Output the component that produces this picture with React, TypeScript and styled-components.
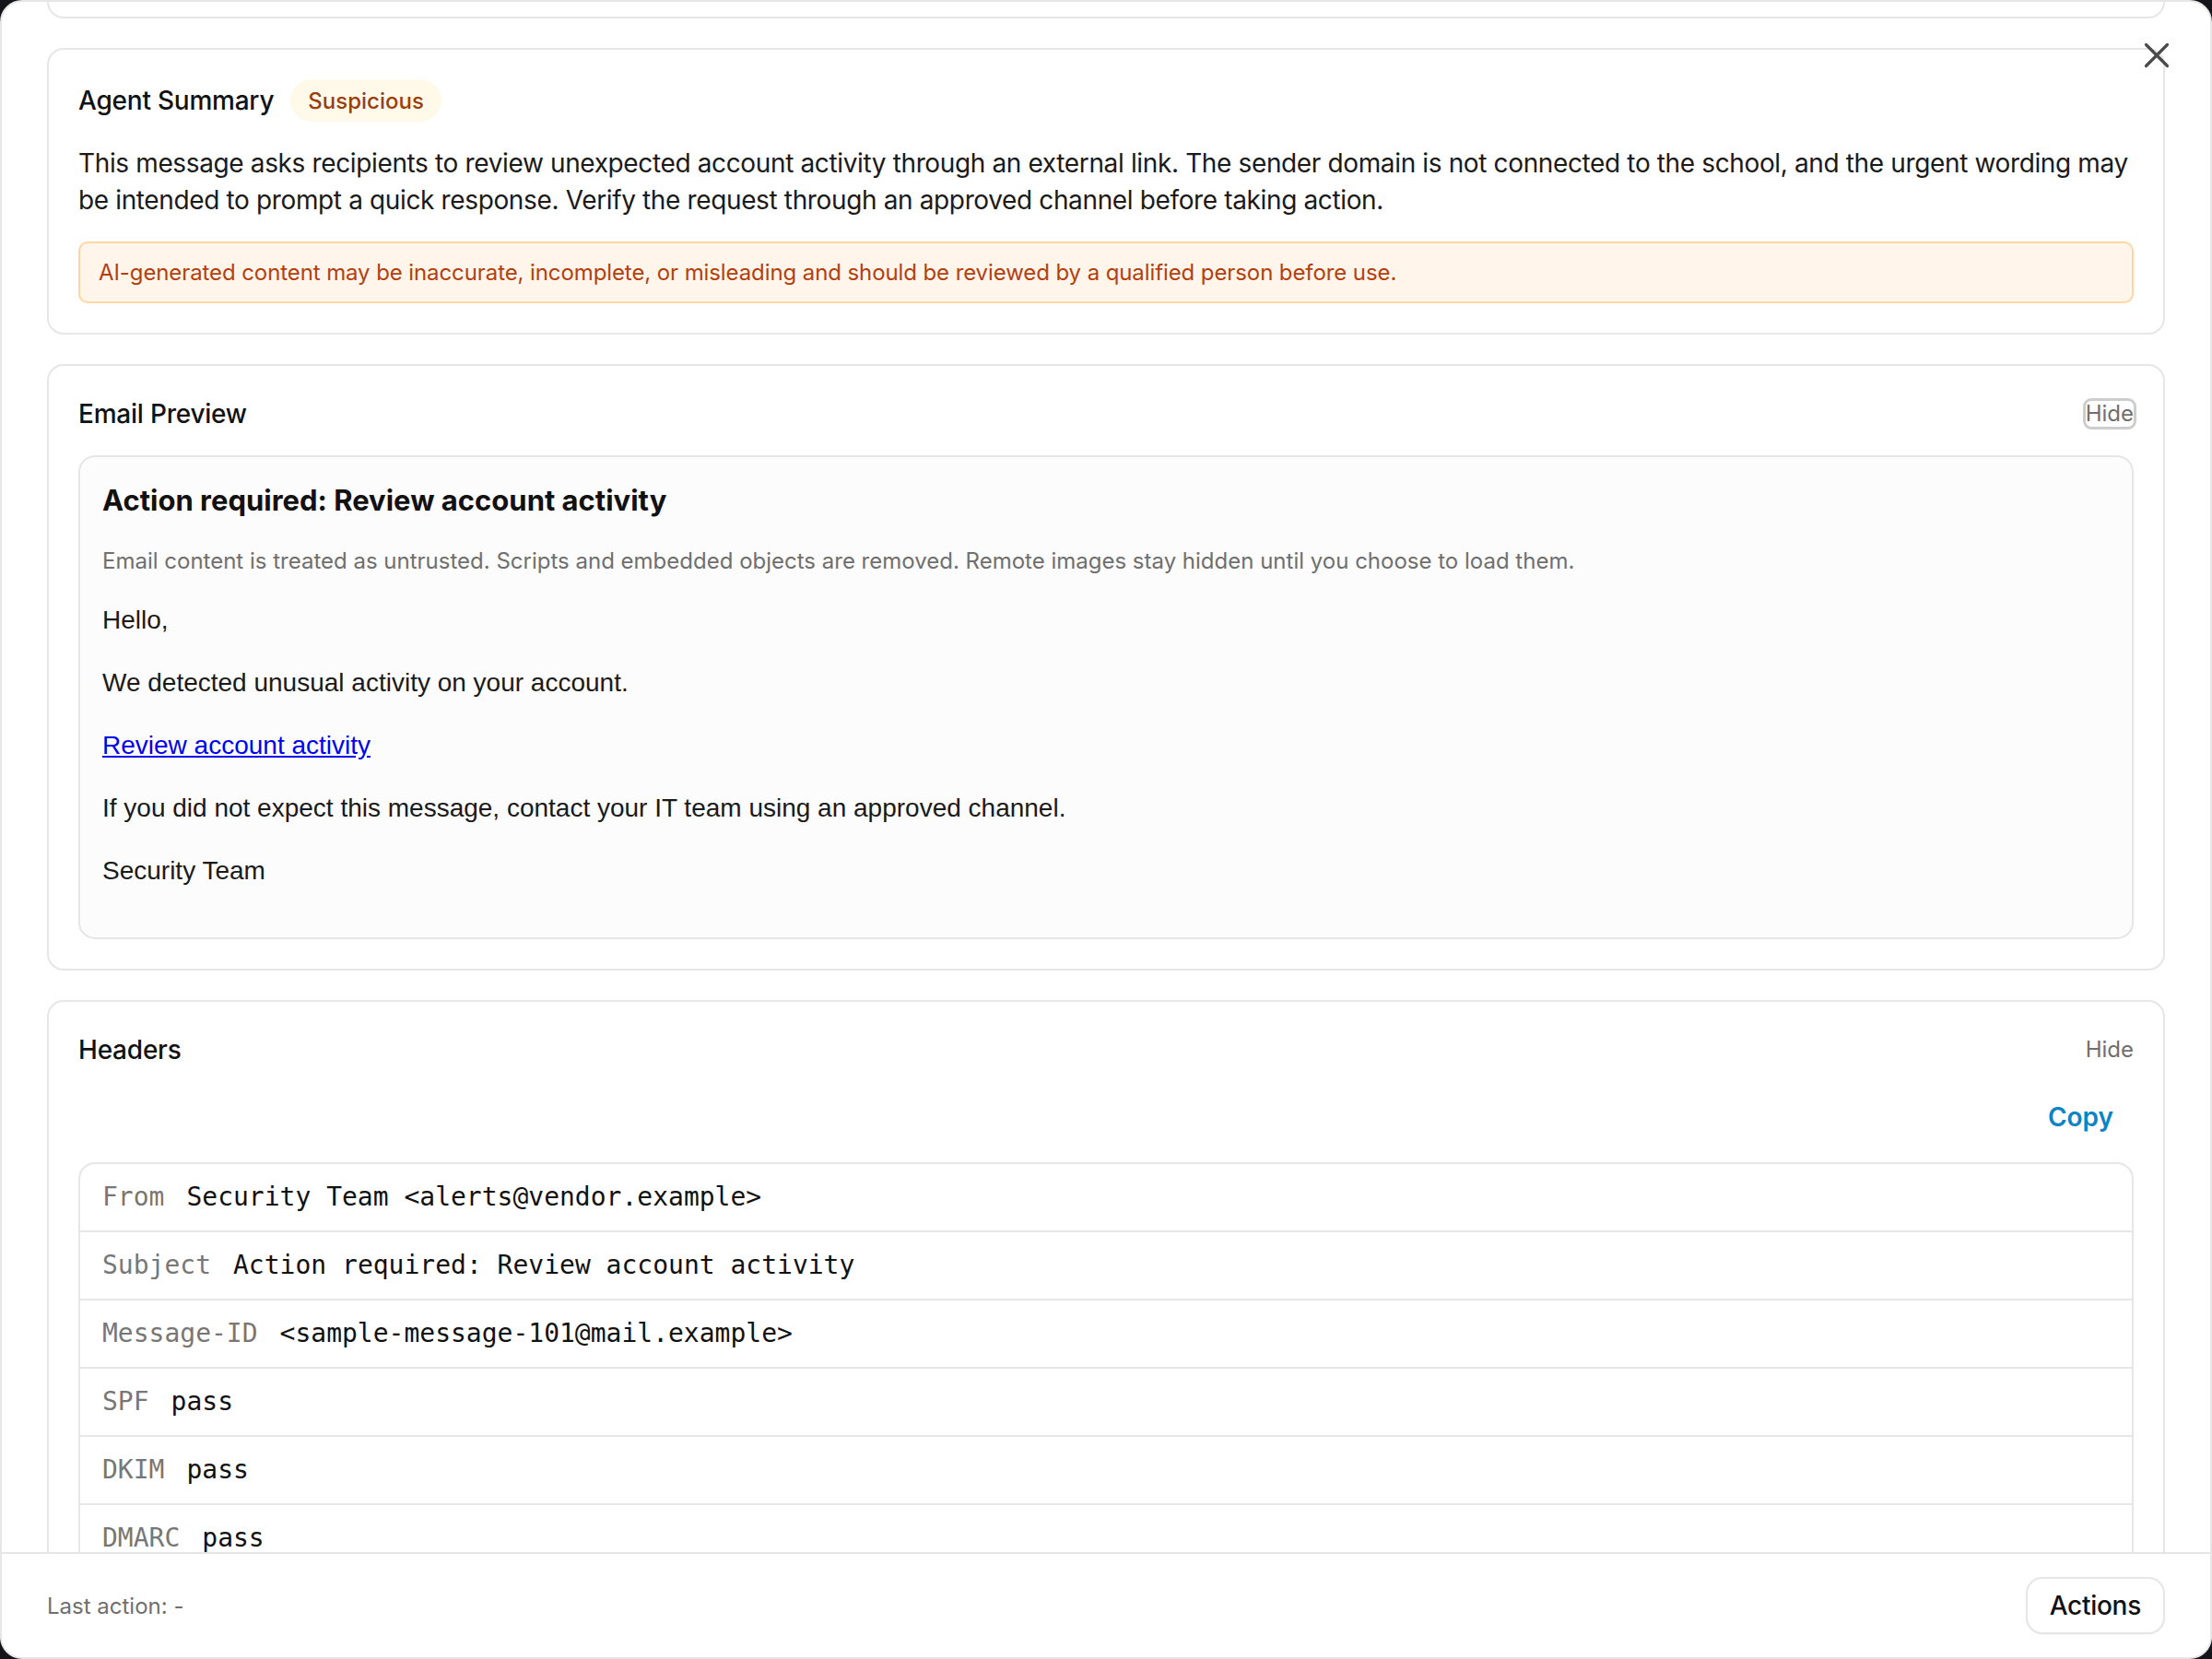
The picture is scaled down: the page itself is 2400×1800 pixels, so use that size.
import React, { useLayoutEffect, useRef } from 'react'
import styled, { createGlobalStyle } from 'styled-components'

const GlobalStyle = createGlobalStyle`
  * { box-sizing: border-box; }
  html, body {
    margin: 0;
    padding: 0;
    height: 100%;
  }
  body {
    background: #14141b;
    overflow: hidden;
    font-family: Inter, "Noto Sans", sans-serif;
    color: #111;
  }
  #root { height: 100%; }
`

const Backdrop = styled.div`
  display: flex;
  width: 100vw;
  height: 100vh;
`

const Modal = styled.div`
  position: relative;
  flex: 1;
  display: flex;
  flex-direction: column;
  background: #fff;
  border: 2px solid #e6e6e6;
  border-radius: 24px;
  overflow: hidden;
`

const CloseButton = styled.button`
  position: absolute;
  top: 42px;
  right: 42px;
  display: flex;
  padding: 2px;
  border: 0;
  background: none;
  color: #4a4a4a;
  cursor: pointer;
`

const Body = styled.div`
  flex: 1;
  min-height: 0;
  overflow: hidden;
  padding: 0 49px;
`

const Stack = styled.div`
  display: flex;
  flex-direction: column;
  gap: 32px;
  padding: 32px 0;
`

const Card = styled.section`
  display: flex;
  flex-direction: column;
  gap: 25px;
  padding: 32px;
  background: #fff;
  border: 2px solid #e6e6e6;
  border-radius: 18px;
`

const CardHeader = styled.div`
  display: flex;
  align-items: center;
  justify-content: space-between;
  min-height: 40px;
`

const TitleGroup = styled.div`
  display: flex;
  align-items: center;
  gap: 18px;
`

const CardTitle = styled.h2`
  margin: 0;
  font-size: 28px;
  line-height: 40px;
  font-weight: 500;
  letter-spacing: -0.008em;
  color: #111;
`

const Badge = styled.span`
  display: inline-flex;
  align-items: center;
  height: 46px;
  padding: 0 19px;
  border-radius: 23px;
  background: #fef9e8;
  color: #9a3f0c;
  font-size: 24px;
  font-weight: 500;
`

const Summary = styled.p`
  margin: 0;
  font-size: 28px;
  line-height: 40px;
  letter-spacing: -0.013em;
  color: #1a1a1a;
`

const Notice = styled.div`
  padding: 14px 20px;
  background: #fff5eb;
  border: 2px solid #fdd6a2;
  border-radius: 10px;
  color: #b3400d;
  font-size: 24px;
  line-height: 35px;
  letter-spacing: -0.004em;
`

const HideButton = styled.button<{ $focused?: boolean }>`
  padding: 0;
  border: 0;
  outline: ${p => (p.$focused ? '3px solid #cdcdcd' : 'none')};
  border-radius: 6px;
  background: #fff;
  color: #6f6f6f;
  font-family: inherit;
  font-size: 24px;
  line-height: 28px;
  cursor: pointer;
`

const PreviewBox = styled.div`
  display: flex;
  flex-direction: column;
  gap: 26px;
  padding: 24px;
  background: #fcfcfc;
  border: 2px solid #e6e6e6;
  border-radius: 18px;
`

const PreviewSubject = styled.h3`
  margin: 0;
  font-size: 31px;
  line-height: 45px;
  font-weight: 700;
  color: #111;
`

const PreviewNote = styled.p`
  margin: 0;
  font-size: 24px;
  line-height: 36px;
  color: #6f6f6f;
`

const EmailContent = styled.div`
  display: flex;
  flex-direction: column;
  gap: 28px;
  padding-bottom: 28px;
  font-family: "Liberation Sans", Arial, sans-serif;
  font-size: 28px;
  color: #1a1a1a;

  p {
    margin: 0;
    line-height: 40px;
  }

  a {
    color: #0000ee;
    text-decoration: underline;
  }
`

const Toolbar = styled.div`
  display: flex;
  justify-content: flex-end;
`

const CopyButton = styled.button`
  padding: 8px 22px 4px;
  border: 0;
  background: none;
  color: #0b84c6;
  font-family: inherit;
  font-size: 28px;
  font-weight: 600;
  line-height: 40px;
  cursor: pointer;
`

const HeaderTable = styled.div`
  border: 2px solid #e6e6e6;
  border-radius: 18px;
  overflow: hidden;
  background: #fff;
`

const HeaderRow = styled.div`
  display: flex;
  gap: 24px;
  padding: 16px 24px;
  font-family: "DejaVu Sans Mono", "Liberation Mono", monospace;
  font-size: 28px;
  line-height: 40px;

  & + & {
    border-top: 2px solid #e6e6e6;
  }
`

const HeaderKey = styled.span`
  color: #777;
`

const HeaderValue = styled.span`
  color: #111;
`

const Footer = styled.footer`
  display: flex;
  align-items: center;
  justify-content: space-between;
  padding: 25px 49px;
  border-top: 2px solid #e6e6e6;
  background: #fff;
`

const LastAction = styled.span`
  font-size: 24px;
  color: #6f6f6f;
`

const ActionsButton = styled.button`
  height: 62px;
  padding: 0 24px;
  background: #fff;
  border: 2px solid #e6e6e6;
  border-radius: 18px;
  box-shadow: 0 1px 2px rgba(0, 0, 0, 0.04);
  color: #111;
  font-family: inherit;
  font-size: 28px;
  font-weight: 500;
  letter-spacing: -0.01em;
  cursor: pointer;
`

const headers = [
  ['From', 'Security Team <alerts@vendor.example>'],
  ['Subject', 'Action required: Review account activity'],
  ['Message-ID', '<sample-message-101@mail.example>'],
  ['SPF', 'pass'],
  ['DKIM', 'pass'],
  ['DMARC', 'pass'],
]

const CloseIcon = () => (
  <svg width="28" height="28" viewBox="0 0 28 28" fill="none">
    <path d="M2.5 2.5L25.5 25.5M25.5 2.5L2.5 25.5" stroke="currentColor" strokeWidth="3.2" strokeLinecap="round" />
  </svg>
)

const App: React.FC = () => {
  const bodyRef = useRef<HTMLDivElement>(null)
  const detailsRef = useRef<HTMLElement>(null)

  // the dialog body is scrolled so that only the bottom edge of the details card shows
  useLayoutEffect(() => {
    const body = bodyRef.current
    const details = detailsRef.current
    if (!body || !details) return
    const offset = details.getBoundingClientRect().bottom - body.getBoundingClientRect().top
    body.scrollTop = offset - 18
  }, [])

  return (
    <>
      <GlobalStyle />
      <Backdrop>
        <Modal role="dialog" aria-label="Message review">
          <Body ref={bodyRef}>
            <Stack>
              <Card ref={detailsRef}>
                <CardHeader>
                  <CardTitle>Details</CardTitle>
                </CardHeader>
              </Card>

              <Card>
                <CardHeader>
                  <TitleGroup>
                    <CardTitle>Agent Summary</CardTitle>
                    <Badge>Suspicious</Badge>
                  </TitleGroup>
                </CardHeader>
                <Summary>
                  This message asks recipients to review unexpected account activity through an external link. The sender domain is not connected to the school, and the urgent wording may be intended to prompt a quick response. Verify the request through an approved channel before taking action.
                </Summary>
                <Notice>
                  AI-generated content may be inaccurate, incomplete, or misleading and should be reviewed by a qualified person before use.
                </Notice>
              </Card>

              <Card>
                <CardHeader>
                  <CardTitle>Email Preview</CardTitle>
                  <HideButton $focused>Hide</HideButton>
                </CardHeader>
                <PreviewBox>
                  <PreviewSubject>Action required: Review account activity</PreviewSubject>
                  <PreviewNote>
                    Email content is treated as untrusted. Scripts and embedded objects are removed. Remote images stay hidden until you choose to load them.
                  </PreviewNote>
                  <EmailContent>
                    <p>Hello,</p>
                    <p>We detected unusual activity on your account.</p>
                    <p><a href="#review">Review account activity</a></p>
                    <p>If you did not expect this message, contact your IT team using an approved channel.</p>
                    <p>Security Team</p>
                  </EmailContent>
                </PreviewBox>
              </Card>

              <Card>
                <CardHeader>
                  <CardTitle>Headers</CardTitle>
                  <HideButton>Hide</HideButton>
                </CardHeader>
                <Toolbar>
                  <CopyButton>Copy</CopyButton>
                </Toolbar>
                <HeaderTable>
                  {headers.map(([key, value]) => (
                    <HeaderRow key={key}>
                      <HeaderKey>{key}</HeaderKey>
                      <HeaderValue>{value}</HeaderValue>
                    </HeaderRow>
                  ))}
                </HeaderTable>
              </Card>
            </Stack>
          </Body>

          <Footer>
            <LastAction>Last action: -</LastAction>
            <ActionsButton>Actions</ActionsButton>
          </Footer>

          <CloseButton aria-label="Close">
            <CloseIcon />
          </CloseButton>
        </Modal>
      </Backdrop>
    </>
  )
}

export default App
